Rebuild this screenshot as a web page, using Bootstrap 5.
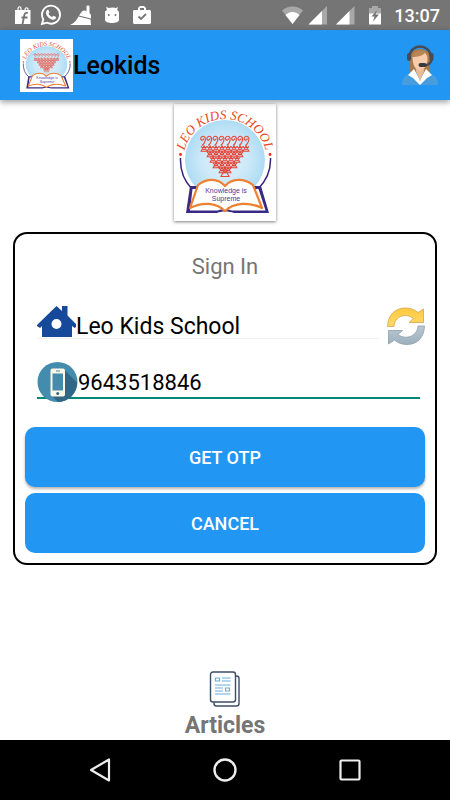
<!DOCTYPE html>
<html lang="en">
<head>
<meta charset="utf-8">
<meta name="viewport" content="width=device-width, initial-scale=1">
<title>Leokids</title>
<link href="https://cdn.jsdelivr.net/npm/bootstrap@5.3.0/dist/css/bootstrap.min.css" rel="stylesheet">
<style>
  body { font-family: Roboto, "Liberation Sans", sans-serif; background: #fff; color: #000; }
  svg { display: block; flex-shrink: 0; }
  .status-bar { height: 30px; background: #757575; color: #fff; padding: 0 10px 0 14px; font-size: 18px; font-weight: 500; }
  .signals { margin-right: 12px; }
  .app-bar { height: 70px; background: #2196f3; padding: 0 11px 0 20px; box-shadow: 0 2px 6px rgba(0,0,0,.4); z-index: 1; }
  .app-title { font-size: 25px; font-weight: 500; line-height: 32px; padding-top: 2px; }
  .school-logo { margin: 4px auto 11px; box-shadow: 0 1px 3px rgba(0,0,0,.5); }
  .sign-in { margin: 0 13px; padding: 18px 10px 10px; border: 2px solid #000; border-radius: 14px; }
  .sign-in h1 { font-size: 22px; line-height: 30px; color: #757575; font-weight: 400; }
  .fields { padding: 0 0 0 12px; }
  .field-row { height: 33px; border-bottom: 1px solid #f0f0f0; }
  .field-phone { height: 35px; border-bottom: 2px solid #00897b; box-sizing: content-box; margin: 15px 5px 28px 0; }
  .field-text { border: 0; outline: 0; background: transparent; min-width: 0; padding: 7px 0 0; font-size: 22px; line-height: 26px; height: 33px; color: #000; }
  .field-row .field-text { font-size: 23px; }
  .actions { gap: 6px; }
  .action { height: 60px; border-radius: 10px; background: #2196f3; border: 0; color: #fff; font-size: 18px; font-weight: 500; box-shadow: 0 2px 3px rgba(0,0,0,.3); }
  .action:hover { background: #1e88e5; color: #fff; }
  .action-flat { box-shadow: none; }
  .articles { color: #757575; font-size: 23px; font-weight: 700; line-height: 28px; }
  .nav-bar { height: 60px; background: #000; padding: 0 37px; }
  .nav-key { width: 126px; height: 60px; }
  .motto { font-family: "Liberation Sans", sans-serif; fill: #4b3a9b; text-anchor: middle; }
  .arc-name { font-family: "Liberation Serif", serif; font-style: italic; fill: #e8481c; text-anchor: middle; }
</style>
<script src="https://cdn.jsdelivr.net/npm/bootstrap@5.3.0/dist/js/bootstrap.bundle.min.js"></script>
</head>
<body class="d-flex flex-column min-vh-100">

<svg width="0" height="0" class="position-absolute" aria-hidden="true">
  <defs>
    <radialGradient id="sky"><stop offset="0" stop-color="#e2f2fb"/><stop offset=".6" stop-color="#cbe8f8"/><stop offset="1" stop-color="#aedcf4"/></radialGradient>
    <linearGradient id="gold" x1="0" y1="0" x2="0" y2="1"><stop offset="0" stop-color="#fbc93e"/><stop offset="1" stop-color="#ffda6b"/></linearGradient>
    <linearGradient id="steel" x1="0" y1="0" x2="0" y2="1"><stop offset="0" stop-color="#b9c8d3"/><stop offset="1" stop-color="#9db0be"/></linearGradient>
    <g id="kid"><path d="M0-3L-2.8 2.2H2.8zM-3-2.6L0 .6L3-2.6"/></g>
    <g id="kid-row"><use href="#kid" x="-15"/><use href="#kid" x="-9"/><use href="#kid" x="-3"/><use href="#kid" x="3"/><use href="#kid" x="9"/><use href="#kid" x="15"/></g>
    <g id="curl"><path d="M-1.4 5.5C1.8 2.6 3-1.9.9-3.3C-1.2-4.6-3.6-2.4-2.6-.6C-1.7.8.6-.1.2-1.6"/></g>
    <symbol id="crest" viewBox="0 0 102 117" preserveAspectRatio="none">
      <path fill="#fff" d="M0 0h102v117H0z"/>
      <circle cx="51" cy="56" r="40" fill="url(#sky)"/>
      <g fill="none" stroke="#33257f" stroke-width="1.500"><path d="M6.500 54C6 67 10 77 18 85M96.500 54C97 67 92 77 84 85"/></g>
      <circle cx="6.500" cy="50.500" r="1.400" fill="#e8281c"/><circle cx="96" cy="50.500" r="1.400" fill="#e8281c"/>
      <g fill="none" stroke="#e4473a" stroke-width="1.100">
        <use href="#curl" x="29.500" y="36"/><use href="#curl" x="35.700" y="36"/><use href="#curl" x="41.900" y="36"/><use href="#curl" x="48.100" y="36"/><use href="#curl" x="54.300" y="36"/><use href="#curl" x="60.500" y="36"/><use href="#curl" x="66.700" y="36"/><use href="#curl" x="73" y="36"/>
        <use href="#kid-row" x="51" y="45"/><use href="#kid" x="30" y="45"/><use href="#kid" x="72" y="45"/>
        <use href="#kid-row" x="51" y="50.500"/>
        <use href="#kid" x="39" y="56"/><use href="#kid" x="45" y="56"/><use href="#kid" x="51" y="56"/><use href="#kid" x="57" y="56"/><use href="#kid" x="63" y="56"/>
        <use href="#kid" x="42" y="61.500"/><use href="#kid" x="48" y="61.500"/><use href="#kid" x="54" y="61.500"/><use href="#kid" x="60" y="61.500"/>
        <use href="#kid" x="48" y="66.500"/><use href="#kid" x="54" y="66.500"/>
        <path d="M51 65L47 72.500H55z"/>
      </g>
      <path fill="#3a2a86" d="M16 82h71l8 27H60c-5-2-13-2-17 0H12z"/>
      <path fill="#fff" d="M18.500 85h66l7 21.500H58c-5-2-10-2-14 0H16z"/>
      <path fill="#fff" stroke="#ee8130" stroke-width="2.200" stroke-linejoin="round" d="M24 81C33 74 44 74 51 82C58 74 70 74 79 81L88 104C76 98 60 98 51 107C42 98 28 98 16 104z"/>
    </symbol>
  </defs>
</svg>

<div class="status-bar d-flex align-items-center justify-content-between">
  <div class="d-flex align-items-center gap-2" aria-hidden="true">
    <svg width="18" height="20" viewBox="0 0 18 20"><path fill="#fff" d="M1 5h15.500v14H1z"/><path d="M4 9V4c0-3 3-3 3 0v1M11 5c0-3 3-3 3 0" fill="none" stroke="#fff" stroke-width="1.200"/><path d="M8.500 19l2-9.500c.4-1.500 1.500-2 3.500-1.500M7.500 12.500h6" fill="none" stroke="#757575" stroke-width="1.800"/></svg>
    <svg width="22" height="22" viewBox="0 0 22 22"><path d="M2 20l1.300-4.700A9 9 0 1 1 7 18.700z" fill="none" stroke="#fff" stroke-width="1.900"/><path fill="#fff" d="M7 6.200c1-.8 1.600-.5 2 1l.5 1.200-1 1.400c1 1.700 2 2.600 3.700 3.300l1.200-1.400 2.700 1.300c0 2.300-2.300 3.200-4.300 2.500C8.500 14.400 6.500 12 6 9.500c-.2-1.200.2-2.500 1-3.300z"/></svg>
    <svg width="22" height="21" viewBox="0 0 22 21" fill="#fff"><path d="M16.500 1.500c0-1.500 3-1.500 3 0V8l1.500 2v3.500L9 10.500l3-4c1.500-1.500 3-1.500 4.500 0zM8.500 11.500l12 3L21 20H0c4-1.500 6.500-4.500 8.500-8.500z"/></svg>
    <svg width="24" height="20" viewBox="0 0 24 20"><path fill="#fff" fill-rule="evenodd" d="M5 9V6.500L7 5 6 2l3 1c2-.7 5-.7 7 0l2-1-.8 3L19 7v8c0 4-14 4-14 0zM7.800 10a1 1 0 1 0 2 0a1 1 0 1 0-2 0M14.500 10a1 1 0 1 0 2 0a1 1 0 1 0-2 0"/></svg>
    <svg width="20" height="20" viewBox="0 0 20 20"><path fill="#fff" fill-rule="evenodd" d="M6 5V3l2-2h4l2 2v2h4l1 1v12l-1 1H2l-1-1V6l1-1zm2 0h4V3H8z"/><path d="M6.500 11.500l2.500 2.500 5-5" fill="none" stroke="#757575" stroke-width="1.800"/></svg>
  </div>
  <div class="d-flex align-items-center">
    <svg class="signals" width="100" height="20" viewBox="0 0 100 20" aria-hidden="true">
      <path fill="#a8a8a8" d="M0 5.500C6 .3 15 .3 21 5.500L10.500 19z"/><path fill="#fff" d="M3.500 10c4-4 10-4 14 0l-7 9z"/>
      <path fill="#a8a8a8" d="M26.500 19.500L45 1v18.500z"/><path fill="#fff" d="M26.500 19.500L40 6v13.500z"/>
      <path fill="#a8a8a8" d="M54 19.500L72.500 1v18.500z"/><path fill="#fff" d="M54 19.500L67.500 6v13.500z"/>
      <path fill="#a8a8a8" d="M87 3h3V1h6v2h3v6H87z"/><path fill="#fff" d="M87 8.500h12v11H87z"/><path fill="#757575" d="M95 5l-5.500 6.500h3L91 16.500l6-7h-3.500z"/>
    </svg>
    <time>13:07</time>
  </div>
</div>

<header class="app-bar d-flex align-items-center position-relative">
  <svg width="53" height="53" viewBox="0 0 102 102" role="img" aria-label="Leo Kids School crest">
    <use href="#crest" width="102" height="102"/>
    <path id="arc-small" fill="none" d="M9 51A42 38 0 0 1 93 51"/>
    <text class="arc-name" font-size="12"><textPath href="#arc-small" startOffset="50%">LEO KIDS SCHOOL</textPath></text>
    <text class="motto" font-size="7" x="52" y="77">Knowledge is</text><text class="motto" font-size="7" x="52" y="85">Supreme</text>
  </svg>
  <span class="app-title">Leokids</span>
  <button type="button" class="btn p-0 border-0 ms-auto" aria-label="Contact support">
    <svg width="38" height="42" viewBox="0 0 38 42">
      <path fill="#a97a49" d="M9 29V12C9 3 29 3 29 12v17z"/>
      <path fill="#dfb08c" d="M15 20h8v8l-4 7-4-7z"/>
      <path fill="#f6ccaa" d="M11.500 13C17 12 22 11 24 8c2 2 2.500 4 2.500 7 0 6-3 11-7.500 11s-7.500-5-7.500-13z"/>
      <path fill="#b98552" d="M11 13c0-8 16-9 16 0l-3-4c-3 3-8 4-13 4z"/>
      <path fill="#489ddc" d="M1 41c0-8 4-10 10-12l8 12 8-12c6 2 10 4 10 12z"/>
      <path fill="#fff" d="M13 25l6 11 6-11 6 6-5 3-7 7-7-7-5-3z"/>
      <path fill="#e9ba98" d="M14.500 24h9L19 38z"/><path fill="#f6ccaa" d="M13 20c3 6 9 6 12 0v2l-6 5-6-5z"/>
      <path d="M8.500 13C9-1 29-1 30 13M30.500 15c0 5-4 6.500-9 6.500" fill="none" stroke="#4a4a50" stroke-width="2.400"/>
      <rect x="6" y="9" width="4" height="8" rx="2" fill="#4a4a50"/><rect x="28.500" y="9" width="4" height="8" rx="2" fill="#4a4a50"/><rect x="17.500" y="19" width="8" height="4" rx="2" fill="#38383d"/>
    </svg>
  </button>
</header>

<main class="d-flex flex-column flex-grow-1">
  <svg class="school-logo" width="102" height="117" viewBox="0 0 102 117" role="img" aria-label="Leo Kids School">
    <use href="#crest" width="102" height="117"/>
    <path id="arc-large" fill="none" d="M9 57A42 42 0 0 1 93 57"/>
    <text class="arc-name" font-size="13"><textPath href="#arc-large" startOffset="50%">LEO KIDS SCHOOL</textPath></text>
    <text class="motto" font-size="7" x="52" y="89">Knowledge is</text><text class="motto" font-size="7" x="52" y="97">Supreme</text>
  </svg>

  <form class="sign-in">
    <h1 class="text-center mb-4">Sign In</h1>
    <div class="fields">
      <div class="d-flex align-items-start">
        <div class="field-row d-flex flex-grow-1">
          <label for="school"><svg width="39" height="32" viewBox="0 0 39 32" role="img" aria-label="School"><path fill="#17499b" fill-rule="evenodd" d="M19.500 0L25 5V0h5.500v9.500L39 18v3l-1.500 1L35 20v11H5V20l-2 2-3-2v-1zM19.500 13a5 5 0 1 0 0 10a5 5 0 0 0 0-10"/></svg></label>
          <input class="field-text flex-grow-1" id="school" type="text" value="Leo Kids School">
        </div>
        <button type="button" class="btn p-0 border-0 ms-2" aria-label="Refresh">
          <svg width="38" height="41" viewBox="1 0 38 41"><path fill="url(#gold)" stroke="#d4a34a" stroke-width=".8" d="M1.500 20.500C2 8 10 2 19.500 2c5 0 9 1.500 12.500 4.500L37.500 3v13.500H23l4.500-4C20 6.500 8.500 10 8 20.500z"/><path fill="url(#steel)" stroke="#8d9faa" stroke-width=".8" d="M38.500 20C38 33 30 38.500 21 38.500c-5 0-9-1.500-12.500-4.500L2.500 38V24.500H16.500l-4.500 4C20 34.500 31.500 30 32 20z"/></svg>
        </button>
      </div>
      <div class="field-phone d-flex align-items-start">
        <label for="phone"><svg width="41" height="40" viewBox="0 0 41 40" role="img" aria-label="Mobile number"><circle cx="20.500" cy="20" r="20" fill="#448cae"/><path fill="#316684" d="M27 7.500L40 20.500C40 31 31.500 40 21 40L14 33z"/><rect x="13.500" y="6.500" width="14.500" height="28" rx="2" fill="#fbf6e6"/><path fill="#448cae" d="M15.500 11.500h10.500v17H15.500z"/><path d="M19 9h4" stroke="#448cae"/><circle cx="20.700" cy="31.500" r="1.500" fill="#316684"/></svg></label>
        <input class="field-text flex-grow-1" id="phone" type="tel" value="9643518846">
      </div>
    </div>
    <div class="actions d-grid">
      <button type="submit" class="btn action">GET OTP</button>
      <button type="button" class="btn action action-flat">CANCEL</button>
    </div>
  </form>

  <a href="#" class="articles mt-auto mx-auto text-decoration-none d-flex flex-column align-items-center">
    <svg width="34" height="41" viewBox="0 0 34 41" aria-hidden="true"><g fill="#fff" stroke="#3b4e66" stroke-width="1.400"><rect x="6" y="5" width="25" height="30" rx="2.500"/><rect x="2.500" y="1" width="25" height="30" rx="2.500"/></g><g fill="none" stroke="#66ade0" stroke-width="1.200"><path d="M14 7H22.500M14 10H22.500M7 14H22.500M7 17H15M7 20H15M7 23H22.500"/><path d="M7.500 7h4v3H7.500zM17.500 17h4v3h-4z"/></g></svg>
    Articles
  </a>
</main>

<nav class="nav-bar d-flex justify-content-between" aria-label="System">
  <button type="button" class="nav-key btn p-0 border-0 d-flex align-items-center justify-content-center" aria-label="Back"><svg width="24" height="26" viewBox="0 0 24 26"><path d="M3 13L21 2.500v21z" fill="none" stroke="#eee" stroke-width="2.200" stroke-linejoin="round"/></svg></button>
  <button type="button" class="nav-key btn p-0 border-0 d-flex align-items-center justify-content-center" aria-label="Home"><svg width="26" height="26" viewBox="0 0 26 26"><circle cx="13" cy="13" r="10.500" fill="none" stroke="#eee" stroke-width="2.400"/></svg></button>
  <button type="button" class="nav-key btn p-0 border-0 d-flex align-items-center justify-content-center" aria-label="Recent apps"><svg width="24" height="24" viewBox="0 0 24 24"><rect x="2.500" y="2.500" width="19" height="19" rx="1" fill="none" stroke="#eee" stroke-width="2.200"/></svg></button>
</nav>
</body>
</html>
